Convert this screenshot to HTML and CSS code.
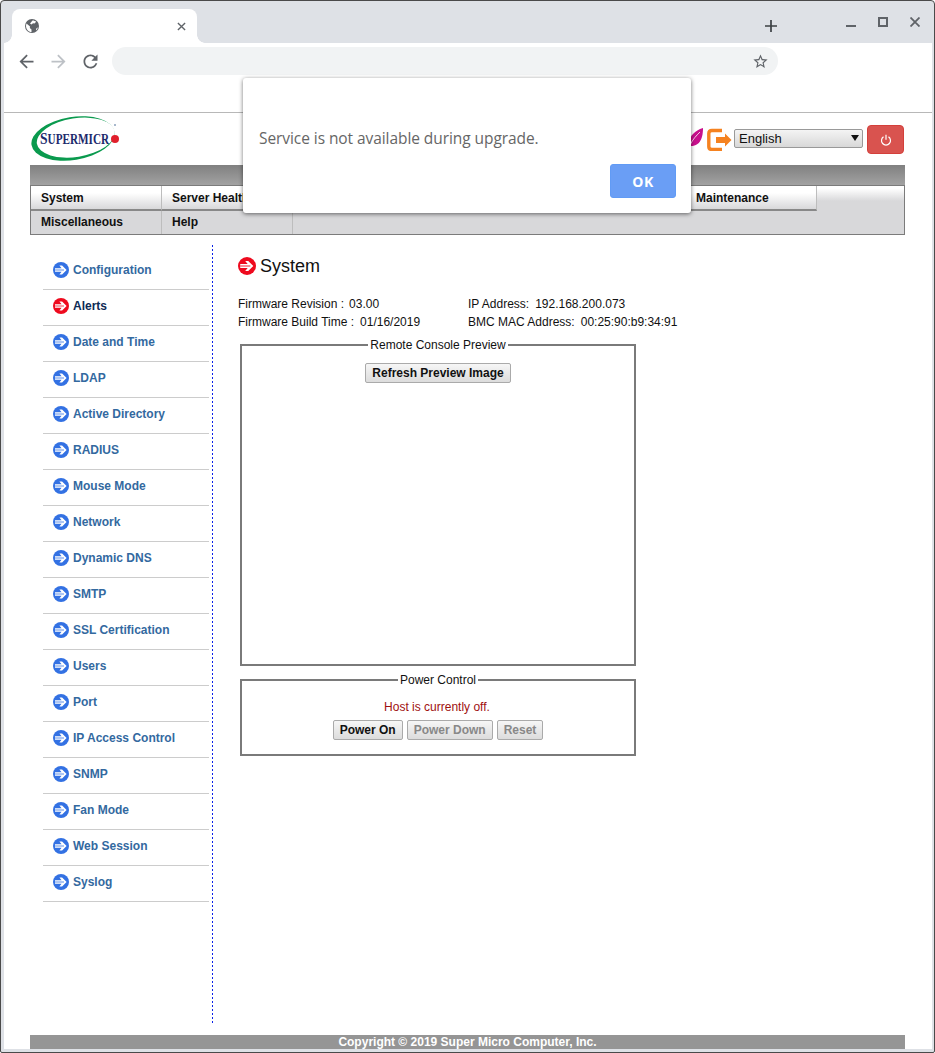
FILE: index.html
```html
<!DOCTYPE html>
<html lang="en">
<head>
<meta charset="utf-8">
<title>Supermicro</title>
<link rel="stylesheet" href="styles.css">
</head>
<body>
<svg class="defs" width="0" height="0" aria-hidden="true">
  <symbol id="arrow" viewBox="0 0 16 16">
    <circle cx="8" cy="8" r="8" fill="currentColor"/>
    <path d="M2 6.300h6.600L6.400 3.600h2.700L13.600 8l-4.500 4.400H6.400l2.200-2.700H2z" fill="#fff"/>
    <path d="M2 8h9" stroke="currentColor" stroke-width=".8"/>
  </symbol>
</svg>
<div class="window">
  <div class="tabstrip">
    <div class="tab">
      <svg class="globe" viewBox="0 0 14 14"><circle cx="7" cy="7" r="7" fill="#5f6368"/><path d="M1.500 4.500 5 7.500 4.800 9 6.500 10.500v2.600C3.500 13 1 10 1 7c0-1 .2-1.700.5-2.500zM7.500 1.500c1.500 0 3 .6 3.700 1.300L9.500 4.500 8 4.200 6.500 5.500 5 4.500zM11 10l1.500-1.800v1.500L11 11.500z" fill="#fff"/></svg>
      <svg class="tabclose" viewBox="0 0 10 10"><path d="M1 1l8 8M9 1l-8 8" stroke="#5f6368" stroke-width="1.500" fill="none"/></svg>
    </div>
    <svg class="plus" viewBox="0 0 12 12"><path d="M6 0v12M0 6h12" stroke="#3c4043" stroke-width="1.700"/></svg>
    <div class="winctl">
      <svg class="ctl" viewBox="0 0 10 10"><path d="M0 9h10" stroke="#5f6368" stroke-width="2"/></svg>
      <svg class="ctl" viewBox="0 0 10 10"><path d="M1 1h8v8H1z" stroke="#5f6368" stroke-width="2" fill="none"/></svg>
      <svg class="ctl" viewBox="0 0 10 10"><path d="M.5.5l9 9M9.500.5l-9 9" stroke="#5f6368" stroke-width="1.800" fill="none"/></svg>
    </div>
  </div>
  <div class="inner">
    <div class="toolbar">
      <button class="tbtn"><svg viewBox="0 0 24 24"><path fill="#5f6368" d="M20 11H7.830l5.590-5.590L12 4l-8 8 8 8 1.410-1.410L7.830 13H20v-2z"/></svg></button>
      <button class="tbtn"><svg class="flip" viewBox="0 0 24 24"><path fill="#bdc1c6" d="M20 11H7.830l5.590-5.590L12 4l-8 8 8 8 1.410-1.410L7.830 13H20v-2z"/></svg></button>
      <button class="tbtn"><svg viewBox="0 0 24 24"><path fill="#5f6368" d="M17.650 6.350C16.200 4.900 14.210 4 12 4c-4.420 0-7.990 3.580-7.990 8s3.570 8 7.990 8c3.730 0 6.840-2.550 7.730-6h-2.080c-.82 2.330-3.040 4-5.650 4-3.310 0-6-2.690-6-6s2.690-6 6-6c1.660 0 3.140.69 4.220 1.780L13 11h7V4l-2.350 2.350z"/></svg></button>
      <div class="omnibox">
        <svg class="star" viewBox="0 0 24 24"><path fill="#5f6368" d="M22 9.240l-7.190-.62L12 2 9.190 8.630 2 9.240l5.460 4.730L5.820 21 12 17.270 18.180 21l-1.630-7.030L22 9.240zM12 15.400l-3.760 2.270 1-4.280-3.320-2.880 4.380-.38L12 6.100l1.710 4.040 4.380.38-3.320 2.880 1 4.280L12 15.400z"/></svg>
      </div>
    </div>
    <div class="page">
      <header class="top">
        <svg class="logo" viewBox="0 0 90 46">
          <ellipse cx="42" cy="22.500" rx="42" ry="21.500" transform="rotate(-9 42 22.500)" fill="#0a9a4e"/>
          <ellipse cx="44.800" cy="21.600" rx="39.400" ry="19.300" transform="rotate(-9 44.800 21.600)" fill="#fff"/>
          <text class="logo-text" x="11.250" y="28" transform="scale(.8 1)"><tspan class="big">S</tspan>UPERMICR</text>
          <circle cx="84" cy="23" r="4" fill="#e0202c"/>
          <circle cx="84" cy="9" r="1" fill="#8aa0bb"/>
        </svg>
        <div class="controls">
          <svg class="leaf" viewBox="0 0 14 19"><path d="M14 0C14 8 12 18 2 18 -3 18 0 4 14 0z" fill="#c8108c"/><path d="M1 17C4 11 7 8 11 4" stroke="#fff" stroke-width=".8" fill="none"/></svg>
          <svg class="exit" viewBox="0 0 25 23"><path d="M15 2.500H5Q1.800 2.500 1.800 5.500v13q0 3 3.200 3h10" fill="none" stroke="#f58220" stroke-width="3.400"/><path d="M9 9h9V5.500l6.500 6.500-6.500 6.500V15H9z" fill="#f58220"/></svg>
          <div class="langwrap"><select class="lang"><option>English</option></select></div>
          <button class="power"><svg viewBox="0 0 12 12"><path d="M3.500 2.800a4.500 4.500 0 1 0 5 0M6 .8v5" fill="none" stroke="#fff" stroke-width="1.200"/></svg></button>
        </div>
      </header>
      <nav class="nav">
        <div class="nav-band"></div>
        <div class="nav-grid">
          <a class="cell up">System</a>
          <a class="cell up">Server Health</a>
          <a class="cell up">Configuration</a>
          <a class="cell up">Remote Control</a>
          <a class="cell up">Virtual Media</a>
          <a class="cell up">Maintenance</a>
          <span class="cell-rest"></span>
          <a class="cell down">Miscellaneous</a>
          <a class="cell down">Help</a>
          <a class="cell down empty"></a>
        </div>
      </nav>
      <div class="body">
        <aside class="side">
          <ul class="menu">
            <li><svg class="ico"><use href="#arrow"/></svg>Configuration</li>
            <li class="active"><svg class="ico"><use href="#arrow"/></svg>Alerts</li>
            <li><svg class="ico"><use href="#arrow"/></svg>Date and Time</li>
            <li><svg class="ico"><use href="#arrow"/></svg>LDAP</li>
            <li><svg class="ico"><use href="#arrow"/></svg>Active Directory</li>
            <li><svg class="ico"><use href="#arrow"/></svg>RADIUS</li>
            <li><svg class="ico"><use href="#arrow"/></svg>Mouse Mode</li>
            <li><svg class="ico"><use href="#arrow"/></svg>Network</li>
            <li><svg class="ico"><use href="#arrow"/></svg>Dynamic DNS</li>
            <li><svg class="ico"><use href="#arrow"/></svg>SMTP</li>
            <li><svg class="ico"><use href="#arrow"/></svg>SSL Certification</li>
            <li><svg class="ico"><use href="#arrow"/></svg>Users</li>
            <li><svg class="ico"><use href="#arrow"/></svg>Port</li>
            <li><svg class="ico"><use href="#arrow"/></svg>IP Access Control</li>
            <li><svg class="ico"><use href="#arrow"/></svg>SNMP</li>
            <li><svg class="ico"><use href="#arrow"/></svg>Fan Mode</li>
            <li><svg class="ico"><use href="#arrow"/></svg>Web Session</li>
            <li><svg class="ico"><use href="#arrow"/></svg>Syslog</li>
          </ul>
        </aside>
        <main class="main">
          <h1 class="title"><svg class="title-ico"><use href="#arrow"/></svg>System</h1>
          <div class="info">
            <div><span class="lab tight">Firmware Revision :</span>03.00</div>
            <div><span class="lab">IP Address:</span>192.168.200.073</div>
            <div><span class="lab">Firmware Build Time :</span>01/16/2019</div>
            <div><span class="lab">BMC MAC Address:</span>00:25:90:b9:34:91</div>
          </div>
          <fieldset class="box preview">
            <legend>Remote Console Preview</legend>
            <button class="btn">Refresh Preview Image</button>
          </fieldset>
          <fieldset class="box powerbox">
            <legend>Power Control</legend>
            <p class="host">Host is currently off.</p>
            <div class="btns">
              <button class="btn">Power On</button>
              <button class="btn off">Power Down</button>
              <button class="btn off">Reset</button>
            </div>
          </fieldset>
        </main>
      </div>
      <footer class="foot">Copyright © 2019 Super Micro Computer, Inc.</footer>
    </div>
  </div>
</div>
<div class="dialog">
  <p class="dialog-msg">Service is not available during upgrade.</p>
  <button class="dialog-ok">OK</button>
</div>
</body>
</html>
```

FILE: styles.css
```css
* { box-sizing: border-box; }
html, body { margin: 0; padding: 0; height: 100%; overflow: hidden; }
body { font-family: "Liberation Sans", Arial, sans-serif; font-size: 12px; color: #111; background: #fff; position: relative; }
.defs { display: block; height: 0; }

.window { height: 1053px; width: 935px; border: 1px solid #4a4a4a; border-radius: 4px 4px 2px 2px; background: #dee1e6; padding: 0 2px 3px 3px; display: flex; flex-direction: column; }

.tabstrip { height: 42px; flex: none; display: flex; align-items: flex-start; }
.tab { position: relative; width: 185px; height: 34px; margin: 8px 0 0 8px; background: #fff; border-radius: 8px 8px 0 0; display: flex; align-items: center; justify-content: space-between; padding: 0 11px 0 13px; flex: none; }
.tab::before, .tab::after { content: ""; position: absolute; bottom: 0; width: 8px; height: 8px; }
.tab::before { left: -8px; background: radial-gradient(circle at 0 0, #dee1e6 7.500px, #fff 8px); }
.tab::after { right: -8px; background: radial-gradient(circle at 100% 0, #dee1e6 7.500px, #fff 8px); }
.globe { width: 14px; height: 14px; }
.tabclose { width: 9px; height: 9px; }
.plus { width: 12px; height: 12px; margin: 19px 0 0 568px; flex: none; }
.winctl { margin: 16px 0 0 auto; padding-right: 12px; display: flex; gap: 22px; }
.ctl { width: 10px; height: 10px; display: block; }

.inner { flex: 1; background: #fff; display: flex; flex-direction: column; min-height: 0; }
.toolbar { height: 70px; flex: none; border-bottom: 1px solid #b8b8b8; display: flex; align-items: flex-start; padding: 4px 0 0 6px; }
.tbtn { width: 32px; height: 28px; padding: 0; border: 0; background: none; display: flex; align-items: center; justify-content: center; }
.tbtn svg { width: 21px; height: 21px; display: block; }
.flip { transform: scaleX(-1); }
.omnibox { width: 666px; height: 28px; margin-left: 6px; background: #f1f3f4; border-radius: 14px; display: flex; align-items: center; justify-content: flex-end; padding-right: 9px; }
.star { width: 17px; height: 17px; }

.page { flex: 1; display: flex; flex-direction: column; padding: 0 27px 0 26px; min-height: 0; }
.top { height: 52px; flex: none; display: flex; justify-content: space-between; align-items: flex-start; }
.logo { width: 90px; height: 46px; margin: 3px 0 0 1px; display: block; }
.logo-text { font-family: "Liberation Serif", serif; font-size: 14px; font-weight: 700; fill: #1c2a6c; }
.big { font-size: 17px; }
.controls { display: flex; align-items: flex-start; margin-right: 1px; }
.leaf { width: 14px; height: 19px; margin-top: 15px; }
.exit { width: 25px; height: 23px; margin: 15px 2px 0 4px; }
.langwrap { position: relative; width: 129px; height: 19px; margin-top: 16px; }
.langwrap::after { content: ""; position: absolute; right: 4px; top: 6px; border: 4px solid transparent; border-top: 6px solid #111; border-bottom: 0; pointer-events: none; }
.lang { appearance: none; display: block; width: 100%; height: 19px; padding: 0 0 0 4px; font: 13px "Liberation Sans", Arial, sans-serif; color: #111; border: 1px solid #999; border-radius: 2px; background: linear-gradient(#f4f4f4, #d8d8d8); }
.power { width: 37px; height: 29px; margin: 12px 0 0 4px; padding: 0; background: #d9534f; border: 1px solid #d43f3a; border-radius: 4px; display: flex; align-items: center; justify-content: center; }
.power svg { width: 12px; height: 12px; }

.nav { height: 70px; flex: none; }
.nav-band { height: 20px; background: linear-gradient(#808080, #a2a2a2); }
.nav-grid { height: 50px; border: 1px solid #7b7b7b; background: #d8d8da; display: grid; grid-template-columns: repeat(6, 131px) 1fr; grid-template-rows: 25px 23px; }
.cell { display: flex; align-items: center; padding-left: 10px; font-weight: 700; color: #111; border-right: 1px solid #bdbdbd; }
.up { background: linear-gradient(#fff 30%, #d8d8da); border-bottom: 2px solid #888; }
.down { background: #d8d8da; padding-bottom: 2px; }
.cell-rest { background: linear-gradient(#fff 10%, #d8d8da 60%); }
.empty { grid-column: 3 / span 5; border-right: 0; border-left: 0; }

.body { flex: 1; display: flex; min-height: 0; }
.side { width: 183px; flex: none; margin: 10px 0 12px; padding: 9px 4px 0 13px; background: linear-gradient(#0a22e8 50%, transparent 50%) right top / 1px 4px repeat-y; }
.menu { list-style: none; margin: 0; padding: 0; }
.menu li { height: 36px; border-bottom: 1px solid #ccc; display: flex; align-items: center; padding: 0 0 4px 10px; font-weight: 700; color: #33699f; }
.menu .active { color: #0d2a55; }
.ico { width: 16px; height: 16px; margin-right: 4px; color: #3371e3; flex: none; }
.active .ico { color: #ee0a1e; }

.main { flex: 1; padding: 22px 0 0 25px; }
.title { margin: 0; display: flex; align-items: center; font-size: 18px; font-weight: 400; height: 18px; color: #111; }
.title-ico { width: 18px; height: 18px; margin-right: 4px; color: #ee0a1e; }
.info { margin-top: 20px; display: grid; grid-template-columns: 230px auto; grid-auto-rows: 18px; align-items: center; justify-content: start; }
.lab { margin-right: 6px; }
.tight { margin-right: 5px; }
.box { margin: 0 0 0 2px; width: 396px; padding: 0; border: 2px solid #7a7a7a; text-align: center; min-width: 0; }
.box legend { padding: 0 2px; margin: 0 auto; font-size: 12px; line-height: 14px; }
.preview { height: 328px; margin-top: 7px; }
.powerbox { height: 83px; margin-top: 7px; }
.btn { height: 20px; padding: 0 6px; font: 700 12px "Liberation Sans", Arial, sans-serif; color: #111; background: linear-gradient(#f6f6f6, #dcdcdc); border: 1px solid #aaa; border-radius: 2px; }
.preview .btn { margin-top: 11px; }
.off { color: #888; }
.host { margin: 13px 2px 6px 0; color: #a01010; line-height: 14px; }
.btns { display: flex; justify-content: center; gap: 4px; }

.foot { height: 14px; flex: none; background: #959595; color: #fff; font-weight: 700; text-align: center; line-height: 14px; }

.dialog { position: absolute; left: 243px; top: 78px; width: 448px; height: 135px; background: #fff; border-radius: 3px; box-shadow: 0 1px 4px rgba(0,0,0,.55); display: flex; flex-direction: column; padding: 49px 15px 15px 16px; }
.dialog-msg { margin: 0; font: 15.500px/22px "Open Sans", sans-serif; letter-spacing: -.07px; color: #666; }
.dialog-ok { width: 66px; height: 34px; margin: auto 0 0 auto; border: 1px solid #619bf5; background: #6a9ef5; color: #fff; border-radius: 3px; font: 700 14px "Open Sans", sans-serif; letter-spacing: .6px; padding: 0; }
```
